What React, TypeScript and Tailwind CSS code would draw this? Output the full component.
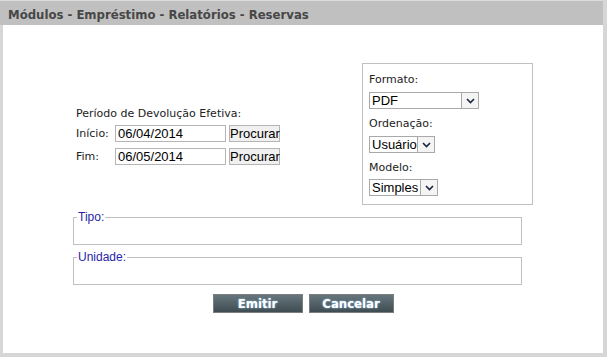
import React from "react";

const labelFont = { fontFamily: '"DejaVu Sans", Verdana, sans-serif' };
const arial = { fontFamily: '"Liberation Sans", Arial, sans-serif' };
const tahoma = { fontFamily: '"DejaVu Sans Condensed", Tahoma, sans-serif' };

function Chevron() {
    return (
        <svg width="9" height="6" viewBox="0 0 9 6">
            <path d="M1 1 L4.5 4.5 L8 1" fill="none" stroke="#1b2540" strokeWidth="1.6" />
        </svg>
    );
}

function Select({ value, width }: { value: string; width: string }) {
    return (
        <div className={`flex h-[17px] ${width} border border-[#a9a9a9] bg-white`} style={arial}>
            <span className="flex-1 pl-[2px] text-[13px] leading-[15px] text-black">{value}</span>
            <span className="flex w-[17px] items-center justify-center border-l border-[#a9a9a9] bg-[#f4f4f4]">
                <Chevron />
            </span>
        </div>
    );
}

function DateRow({ label, value }: { label: string; value: string }) {
    return (
        <div className="flex items-center">
            <span className="w-[39px] text-[11px] text-[#222]" style={labelFont}>
                {label}
            </span>
            <div
                className="h-[17px] w-[111px] border border-[#b5b5b5] bg-white pl-[2px] text-[13px] leading-[15px] text-black"
                style={arial}
            >
                {value}
            </div>
            <button
                type="button"
                className="ml-[3px] h-[17px] w-[51px] border border-[#b5b5b5] bg-[#f0f0f0] text-[13px] leading-[14px] text-black"
                style={arial}
            >
                Procurar
            </button>
        </div>
    );
}

function Group({ title }: { title: string }) {
    return (
        <fieldset className="ml-[70px] mr-[81px] h-[33px] border border-[#c0c0c0] px-[2px]">
            <legend
                className="ml-[1px] px-[1px] text-[12px] leading-[10px] text-[#2a1fa8]"
                style={arial}
            >
                {title}
            </legend>
        </fieldset>
    );
}

export default function App() {
    return (
        <div className="h-[357px] w-[607px] bg-[#d6d6d6] pr-[4px] pb-[4px]">
            <div className="flex h-[353px] flex-col">
                <div className="h-[25px] border-t border-[#dcdcdc] bg-[#c0c0c0] pl-[8px]">
                    <span className="text-[13px] font-bold leading-[23px] text-[#474747]" style={tahoma}>
                        Módulos - Empréstimo - Relatórios - Reservas
                    </span>
                </div>
                <div className="ml-[3px] flex-1 bg-white pt-[38px]">
                    <div className="flex items-center">
                        <div className="ml-[73px] flex w-[286px] flex-col gap-[6px] pt-[3px]">
                            <div className="-mb-[3px] text-[11px] text-[#222]" style={labelFont}>
                                Período de Devolução Efetiva:
                            </div>
                            <DateRow label="Início:" value="06/04/2014" />
                            <DateRow label="Fim:" value="06/05/2014" />
                        </div>
                        <div
                            className="flex h-[142px] w-[171px] flex-col border border-[#c0c0c0] pl-[6px] pt-[8px] text-[11px] text-[#222]"
                            style={labelFont}
                        >
                            <span className="h-[20px]">Formato:</span>
                            <Select value="PDF" width="w-[110px]" />
                            <span className="mt-[7px] h-[20px]">Ordenação:</span>
                            <Select value="Usuário" width="w-[66px]" />
                            <span className="mt-[7px] h-[19px]">Modelo:</span>
                            <Select value="Simples" width="w-[69px]" />
                        </div>
                    </div>
                    <div className="mt-[7px] flex flex-col gap-[7px]">
                        <Group title="Tipo:" />
                        <Group title="Unidade:" />
                    </div>
                    <div className="mt-[9px] flex justify-center gap-[6px]">
                        <button
                            type="button"
                            className="h-[19px] w-[90px] border border-[#7d7d7d] bg-gradient-to-b from-[#66767c] to-[#3f4d52] text-[13px] font-bold leading-[16px] text-white [text-shadow:0_0_2px_#9fd0ff]"
                            style={tahoma}
                        >
                            Emitir
                        </button>
                        <button
                            type="button"
                            className="h-[19px] w-[85px] border border-[#7d7d7d] bg-gradient-to-b from-[#66767c] to-[#3f4d52] text-[13px] font-bold leading-[16px] text-white [text-shadow:0_0_2px_#9fd0ff]"
                            style={tahoma}
                        >
                            Cancelar
                        </button>
                    </div>
                </div>
            </div>
        </div>
    );
}
